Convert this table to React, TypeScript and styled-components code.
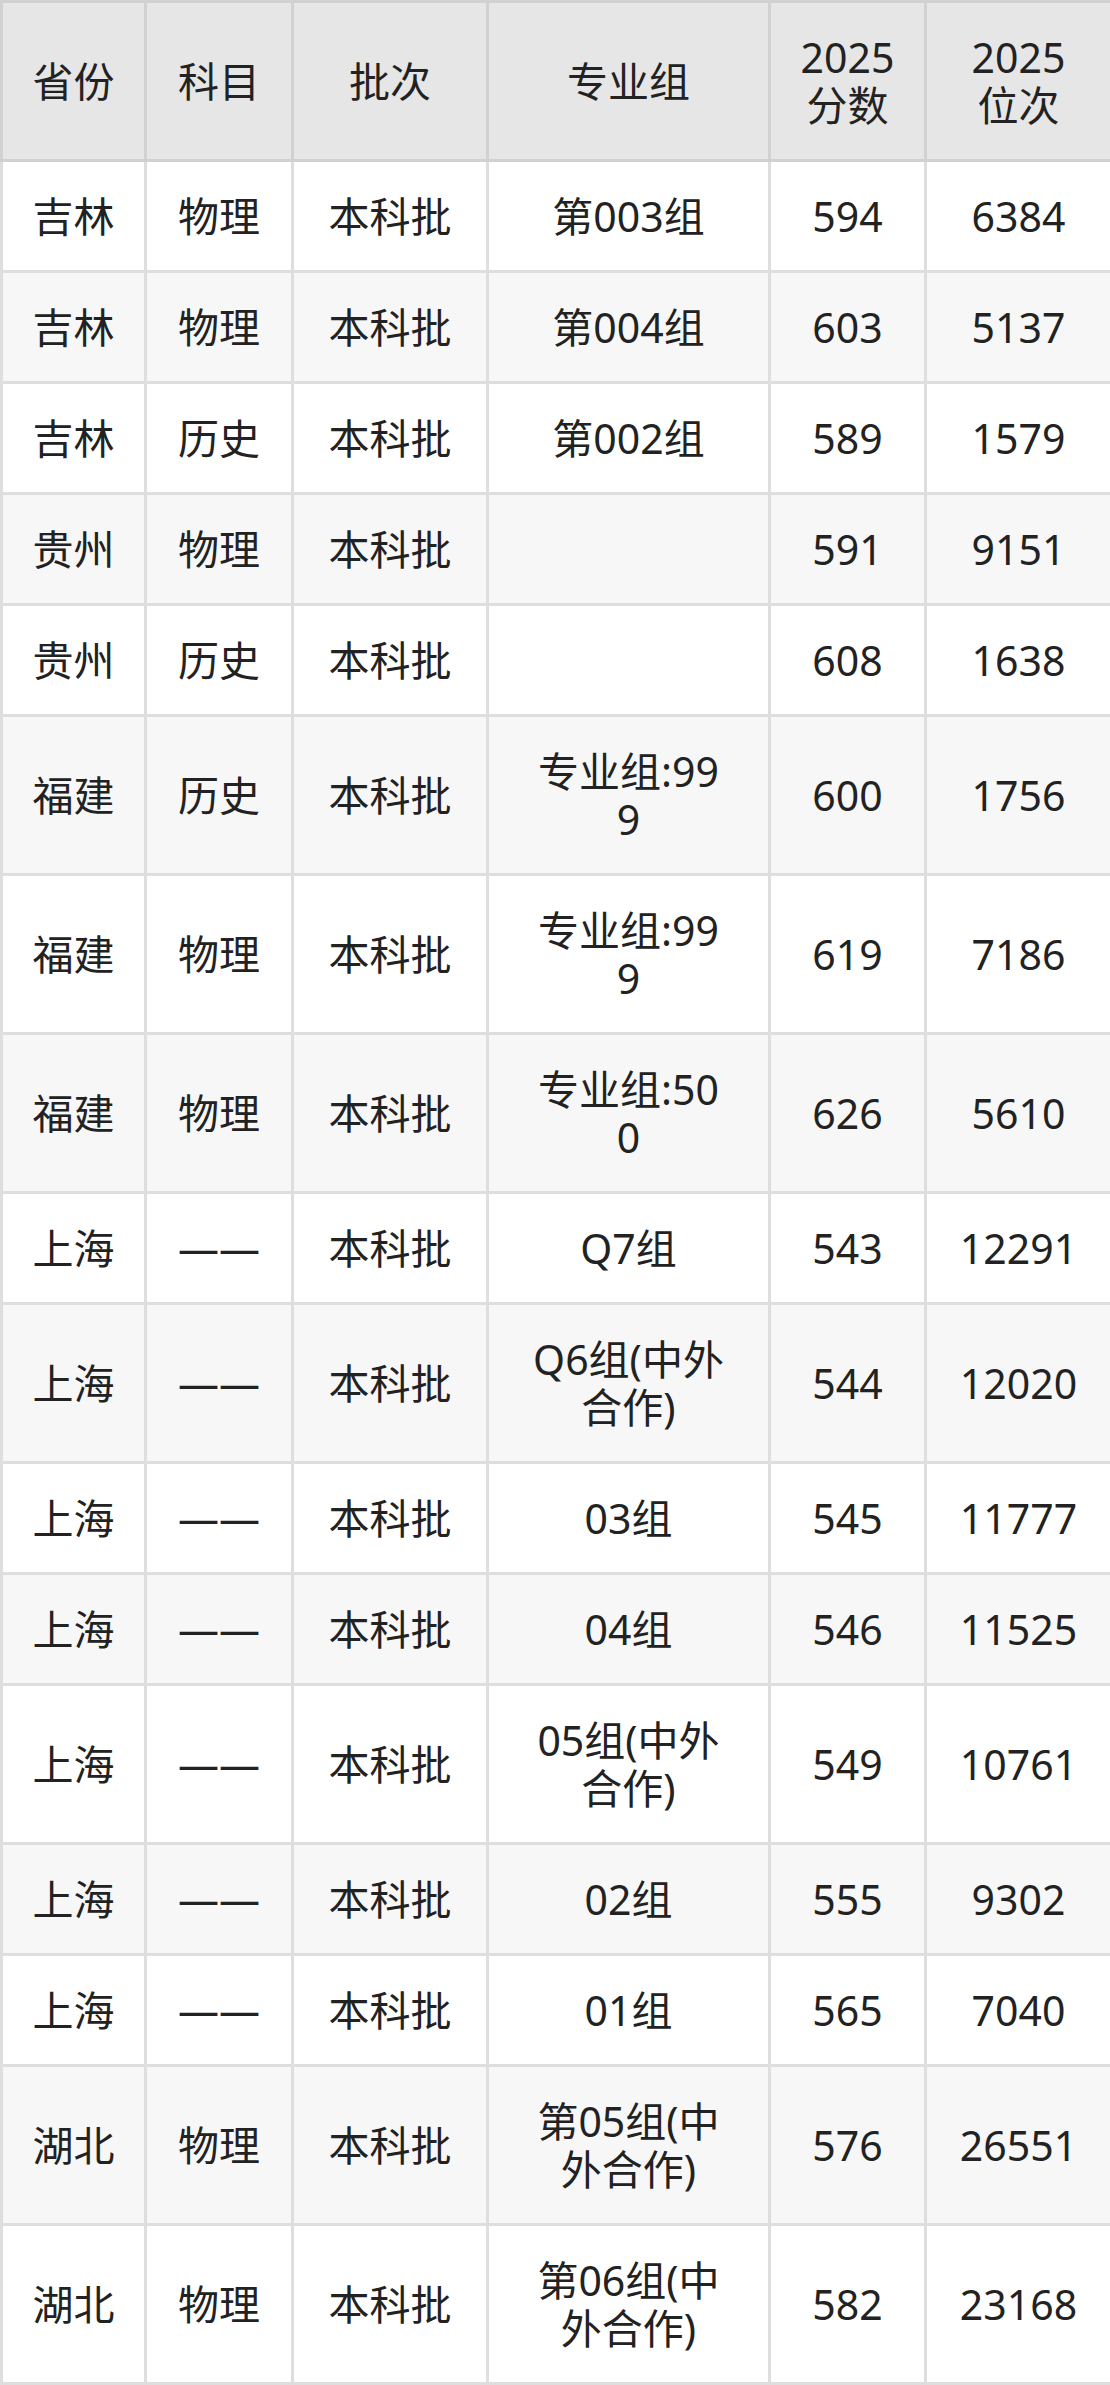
import { createGlobalStyle, styled } from "styled-components";

const GlobalStyle = createGlobalStyle`
  html, body {
    margin: 0;
    padding: 0;
    background: #ffffff;
  }
  body {
    font-family: "Noto Sans", "Noto Sans CJK SC", sans-serif;
    color: #222222;
  }
`;

const StyledTable = styled.table`
  width: 1110px;
  border-collapse: collapse;
  table-layout: fixed;
  font-size: 41px;
  line-height: 48px;
  text-align: center;
`;

const StyledTh = styled.th`
  background: #e6e6e6;
  border: 3px solid #d1d1d1;
  padding: 30px 8px;
  font-weight: normal;
  vertical-align: middle;
`;

const StyledTr = styled.tr<{ $alt: boolean }>`
  background: ${(p) => (p.$alt ? "#f7f7f7" : "#ffffff")};
`;

const StyledTd = styled.td<{ $wide?: boolean }>`
  border: 3px solid #dedede;
  padding: ${(p) => (p.$wide ? "30px 43px" : "30px 8px")};
  vertical-align: middle;
  word-break: break-all;
`;

const widths = [144, 147, 195, 282, 156, 186];

const rows: string[][] = [
  ["吉林", "物理", "本科批", "第003组", "594", "6384"],
  ["吉林", "物理", "本科批", "第004组", "603", "5137"],
  ["吉林", "历史", "本科批", "第002组", "589", "1579"],
  ["贵州", "物理", "本科批", "", "591", "9151"],
  ["贵州", "历史", "本科批", "", "608", "1638"],
  ["福建", "历史", "本科批", "专业组:999", "600", "1756"],
  ["福建", "物理", "本科批", "专业组:999", "619", "7186"],
  ["福建", "物理", "本科批", "专业组:500", "626", "5610"],
  ["上海", "——", "本科批", "Q7组", "543", "12291"],
  ["上海", "——", "本科批", "Q6组(中外合作)", "544", "12020"],
  ["上海", "——", "本科批", "03组", "545", "11777"],
  ["上海", "——", "本科批", "04组", "546", "11525"],
  ["上海", "——", "本科批", "05组(中外合作)", "549", "10761"],
  ["上海", "——", "本科批", "02组", "555", "9302"],
  ["上海", "——", "本科批", "01组", "565", "7040"],
  ["湖北", "物理", "本科批", "第05组(中外合作)", "576", "26551"],
  ["湖北", "物理", "本科批", "第06组(中外合作)", "582", "23168"],
];

export default function App() {
  return (
    <>
      <GlobalStyle />
      <StyledTable>
        <colgroup>
          {widths.map((w, i) => (
            <col key={i} style={{ width: w }} />
          ))}
        </colgroup>
        <thead>
          <tr>
            <StyledTh>省份</StyledTh>
            <StyledTh>科目</StyledTh>
            <StyledTh>批次</StyledTh>
            <StyledTh>专业组</StyledTh>
            <StyledTh>
              2025
              <br />
              分数
            </StyledTh>
            <StyledTh>
              2025
              <br />
              位次
            </StyledTh>
          </tr>
        </thead>
        <tbody>
          {rows.map((r, i) => (
            <StyledTr key={i} $alt={i % 2 === 1}>
              {r.map((c, j) => (
                <StyledTd key={j} $wide={j === 3}>
                  {c}
                </StyledTd>
              ))}
            </StyledTr>
          ))}
        </tbody>
      </StyledTable>
    </>
  );
}
